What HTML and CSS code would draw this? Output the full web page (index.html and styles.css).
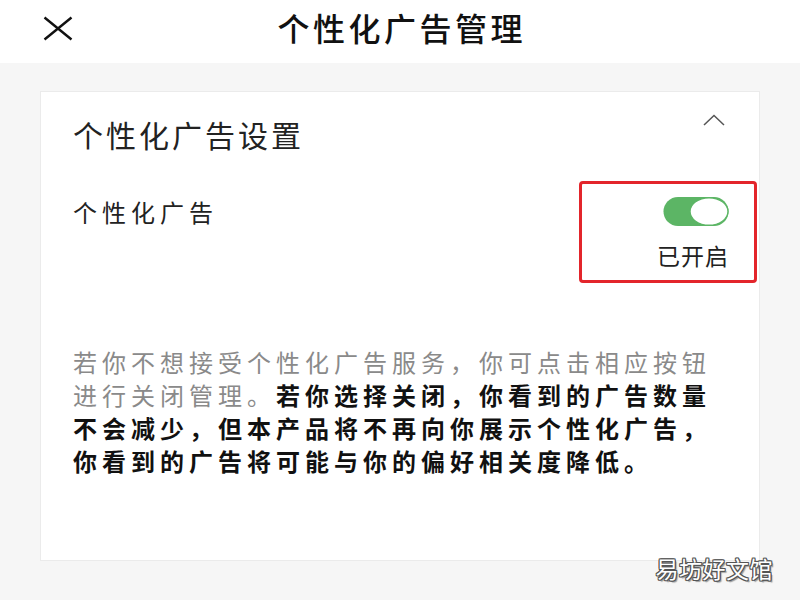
FILE: index.html
```html
<!DOCTYPE html>
<html lang="zh-CN">
<head>
<meta charset="utf-8">
<title>个性化广告管理</title>
<link rel="stylesheet" href="styles.css">
</head>
<body>
<header class="topbar">
  <div class="close">
    <svg width="30" height="25" viewBox="0 0 30 25"><path d="M1.5 1.5 L28.5 23.5 M28.5 1.5 L1.5 23.5" stroke="#111" stroke-width="2.4" fill="none"/></svg>
  </div>
  <h1 class="title">个性化广告管理</h1>
  <div></div>
</header>
<main class="main">
  <section class="card">
    <div class="card-head">
      <h2 class="card-title">个性化广告设置</h2>
      <svg class="chevron" width="22" height="12" viewBox="0 0 22 12"><polyline points="1,11 11,1.5 21,11" fill="none" stroke="#555" stroke-width="1.5"/></svg>
    </div>
    <div class="setting">
      <div class="label">个性化广告</div>
      <div class="control">
        <svg class="toggle" width="66" height="31" viewBox="0 0 66 31">
          <rect x="0.5" y="1" width="65" height="29" rx="14.5" fill="#5cb565"/>
          <ellipse cx="46" cy="15.5" rx="19" ry="13.8" fill="#fff" stroke="#5cb565" stroke-width="1.4"/>
        </svg>
        <div class="state">已开启</div>
      </div>
    </div>
    <p class="desc">若你不想接受个性化广告服务，你可点击相应按钮进行关闭管理。<strong>若你选择关闭，你看到的广告数量不会减少，但本产品将不再向你展示个性化广告，你看到的广告将可能与你的偏好相关度降低。</strong></p>
    <div class="highlight"></div>
  </section>
</main>
<div class="watermark">易坊好文馆</div>
</body>
</html>
```
FILE: styles.css
```css
html, body {
  margin: 0;
  padding: 0;
}
body {
  width: 800px;
  height: 600px;
  background: #f6f6f6;
  font-family: "Noto Sans CJK SC", "Noto Sans", sans-serif;
  position: relative;
  overflow: hidden;
}
.topbar {
  height: 63px;
  background: #fff;
  display: grid;
  grid-template-columns: 1fr auto 1fr;
  align-items: start;
}
.close {
  padding-left: 43px;
  padding-top: 16px;
  line-height: 0;
}
.title {
  margin: 0;
  padding-top: 8px;
  font-size: 32px;
  line-height: 38px;
  font-weight: 500;
  letter-spacing: 3.5px;
  color: #111;
  margin-right: -3.5px;
}
.main {
  padding: 28px 40px 0 40px;
}
.card {
  position: relative;
  box-sizing: border-box;
  height: 470px;
  background: #fff;
  border: 1px solid #ebebeb;
  padding: 22px 34px 0 32px;
}
.card-head {
  display: flex;
  justify-content: space-between;
  align-items: flex-start;
}
.card-title {
  margin: 0;
  font-size: 30px;
  line-height: 40px;
  font-weight: 400;
  letter-spacing: 3px;
  color: #222;
}
.chevron {
  display: block;
}
.setting {
  display: flex;
  justify-content: space-between;
  align-items: flex-start;
  margin-top: 42px;
}
.label {
  font-size: 24px;
  line-height: 32px;
  letter-spacing: 5px;
  color: #222;
}
.control {
  display: flex;
  flex-direction: column;
  align-items: flex-end;
  margin-right: -4px;
}
.toggle {
  display: block;
}
.state {
  margin-top: 14px;
  font-size: 23px;
  line-height: 28px;
  letter-spacing: 1px;
  color: #222;
}
.desc {
  margin: 76px 0 0 0;
  width: 652px;
  font-size: 24px;
  line-height: 33px;
  letter-spacing: 5px;
  color: #8a8a8a;
}
.desc strong {
  color: #111;
  font-weight: 700;
}
.highlight {
  position: absolute;
  left: 538px;
  top: 89px;
  width: 178px;
  height: 102px;
  box-sizing: border-box;
  border: 3px solid #e3252b;
  border-radius: 4px;
}
.watermark {
  position: absolute;
  right: 27px;
  top: 553px;
  font-size: 23px;
  line-height: 30px;
  letter-spacing: 0.5px;
  color: #fff;
  text-shadow: -1px -1px 0 #555, 1px -1px 0 #555, -1px 1px 0 #555, 1px 1px 0 #555, 0 -1px 0 #555, 0 1px 0 #555, -1px 0 0 #555, 1px 0 0 #555, 2px 2px 1px #999;
}
```
